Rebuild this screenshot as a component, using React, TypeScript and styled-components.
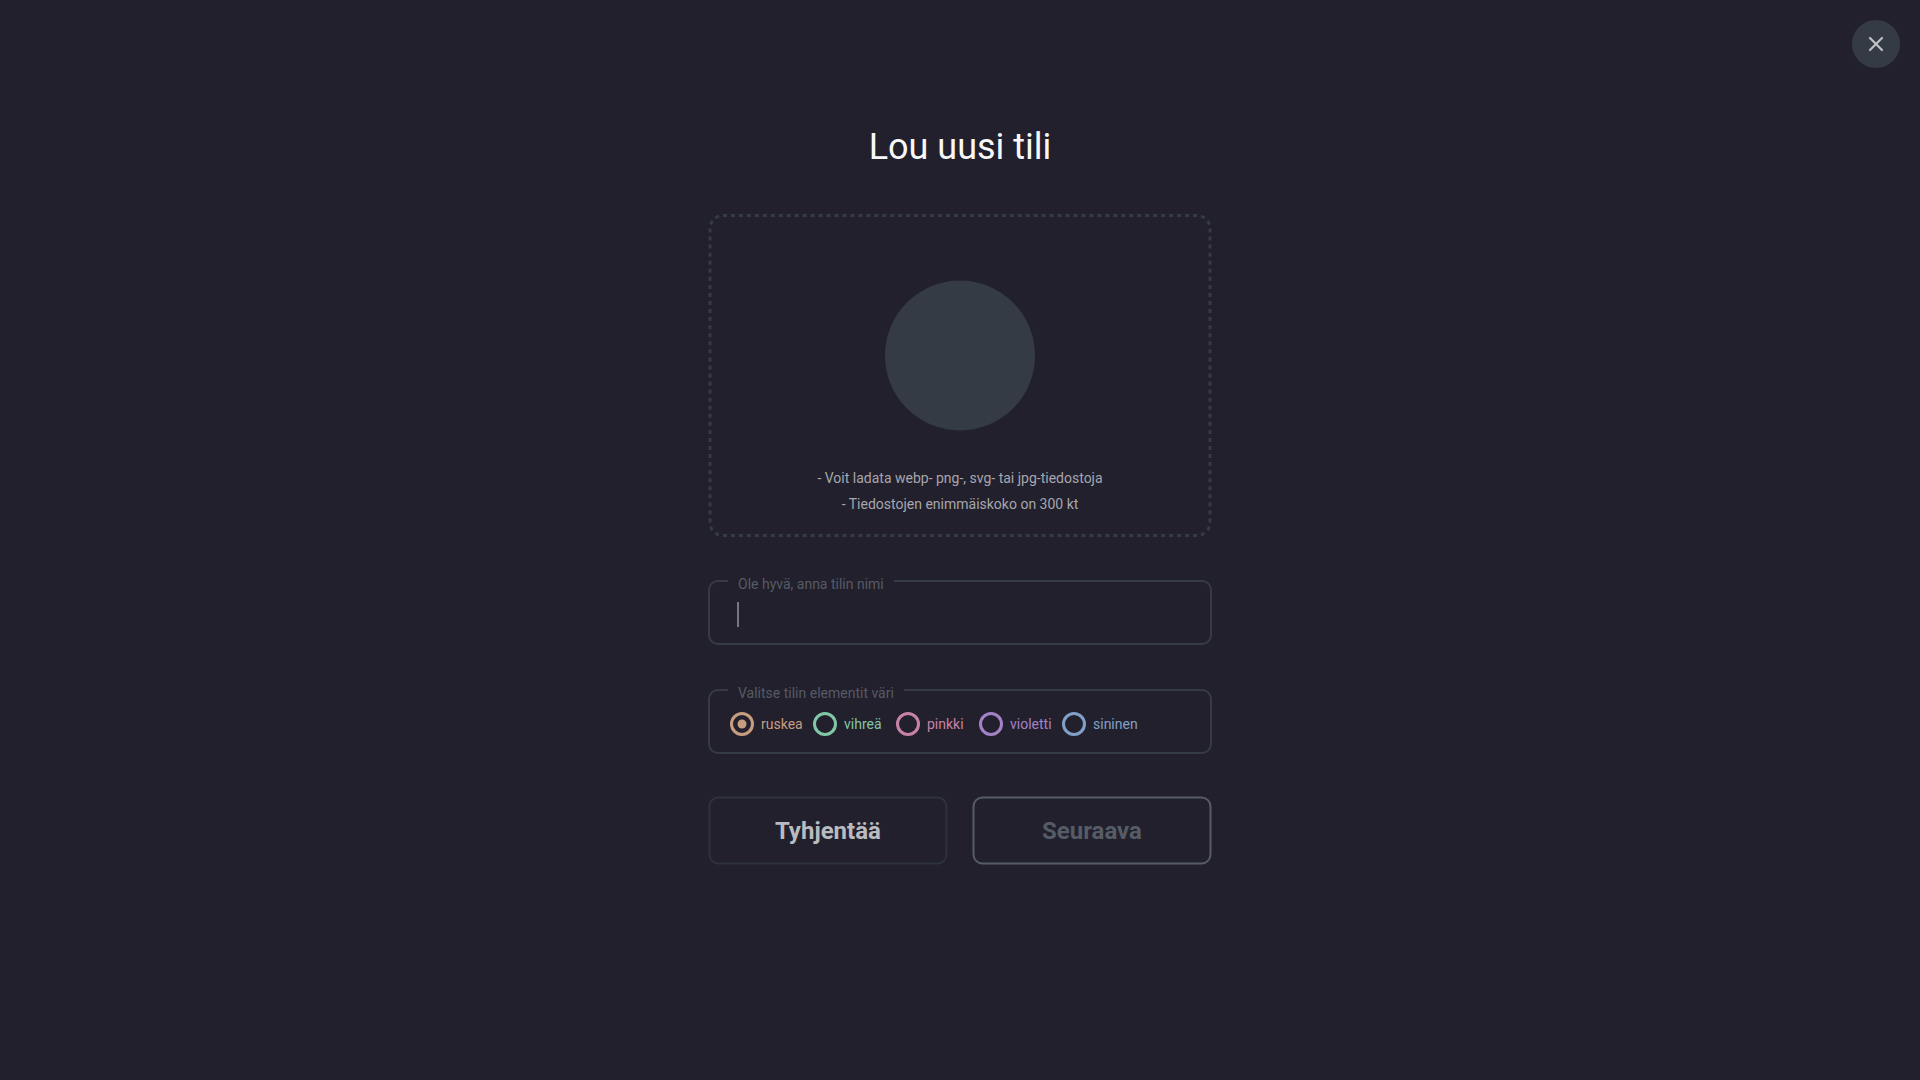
import React, { useState } from "react";
import styled, { createGlobalStyle } from "styled-components";
import { X } from "lucide-react";

const GlobalStyle = createGlobalStyle`
  *, *::before, *::after { box-sizing: border-box; }
  html, body { margin: 0; background: #22202c; }
  body { font-family: Roboto, "Liberation Sans", sans-serif; }
`;

const Page = styled.div`
  width: 1920px;
  height: 1080px;
  overflow: hidden;
  background: #22202c;
`;

const TopBar = styled.header`
  display: flex;
  justify-content: flex-end;
  padding: 20px 20px 0 0;
  height: 68px;
`;

const CloseButton = styled.button`
  display: flex;
  align-items: center;
  justify-content: center;
  width: 48px;
  height: 48px;
  padding: 0;
  border: 0;
  border-radius: 50%;
  background: #353b45;
  color: #c1c3c5;
`;

const Form = styled.form`
  display: flex;
  flex-direction: column;
  width: 504px;
  margin: 0 auto;
`;

const Title = styled.h1`
  margin: 58px 0 0;
  height: 88px;
  text-align: center;
  font-size: 36px;
  font-weight: 400;
  line-height: 42px;
  color: #f8f8f8;
`;

const DropZone = styled.div`
  position: relative;
  display: flex;
  flex-direction: column;
  align-items: center;
  height: 323px;
  padding-top: 66px;
`;

const DashedOutline = styled.svg`
  position: absolute;
  inset: 0;
  width: 504px;
  height: 323px;
  fill: none;
  stroke: #353b45;
  stroke-width: 3px;
`;

const Avatar = styled.div`
  width: 150px;
  height: 150px;
  border-radius: 50%;
  background: #353b45;
  transform: translateY(0.5px);
`;

const Hints = styled.div`
  margin-top: 35px;
  text-align: center;
  font-size: 14px;
  line-height: 26px;
  color: #a6a6ae;
`;

const Field = styled.div<{ $top: number }>`
  display: flex;
  flex-direction: column;
  height: 65px;
  margin-top: ${(p) => p.$top}px;
`;

const Box = styled.fieldset`
  min-width: 0;
  width: 504px;
  height: 73px;
  margin: -8px 0 0;
  padding: 0 18px;
  border: 2px solid #353b45;
  border-radius: 10px;
`;

const Legend = styled.legend`
  height: 18px;
  padding: 4px 10px 0;
  font-size: 14px;
  line-height: 16px;
  color: #565a65;
`;

const NameInput = styled.div`
  display: flex;
  align-items: center;
  height: 48px;
  padding: 1px 0 0 9px;
`;

const Caret = styled.span`
  width: 2px;
  height: 25px;
  background: #77767e;
`;

const Choices = styled.div`
  display: flex;
  padding: 12px 0 0 2px;
`;

const Choice = styled.label<{ $color: string }>`
  display: flex;
  align-items: center;
  gap: 7px;
  width: 83px;
  height: 25px;
  font-size: 14px;
  line-height: 17px;
  color: ${(p) => p.$color};
`;

const ChoiceName = styled.span`
  padding-top: 2px;
`;

const Ring = styled.span`
  display: flex;
  flex: none;
  align-items: center;
  justify-content: center;
  width: 24px;
  height: 24px;
  border: 3px solid currentColor;
  border-radius: 50%;
`;

const Dot = styled.span`
  width: 8px;
  height: 8px;
  border-radius: 50%;
  background: currentColor;
  transform: scale(1.12);
`;

const Actions = styled.div`
  display: flex;
  justify-content: space-between;
  margin-top: 43px;
`;

const ActionButton = styled.button<{ $border: string; $color: string; $nudge: number }>`
  width: 239px;
  height: 68px;
  padding: 0;
  border: 2px solid ${(p) => p.$border};
  border-radius: 10px;
  background: transparent;
  font: 700 24px/28px Roboto, "Liberation Sans", sans-serif;
  color: ${(p) => p.$color};
  transform: translate(${(p) => p.$nudge}px, -0.5px);
`;

const colors = [
  { name: "ruskea", value: "#c79d82" },
  { name: "vihreä", value: "#82c7a5" },
  { name: "pinkki", value: "#c782a5" },
  { name: "violetti", value: "#a582c7" },
  { name: "sininen", value: "#82a0c7" },
];

export default function App() {
  const [selected, setSelected] = useState("ruskea");
  return (
    <Page>
      <GlobalStyle />
      <TopBar>
        <CloseButton aria-label="Sulje">
          <X size={24} strokeWidth={2.2} />
        </CloseButton>
      </TopBar>
      <Form onSubmit={(e) => e.preventDefault()}>
        <Title>Lou uusi tili</Title>
        <DropZone>
          <DashedOutline viewBox="0 0 504 323">
            <path d="M15 1.5H489M15 321.5H489" strokeDasharray="4 3.966" />
            <path d="M2 14.5V308.5M502 14.5V308.5" strokeDasharray="4 4.056" />
            <path
              d="M489 1.5A13 13 0 0 1 502 14.5M502 308.5A13 13 0 0 1 489 321.5M15 321.5A13 13 0 0 1 2 308.5M2 14.5A13 13 0 0 1 15 1.5"
              strokeDasharray="0 4.08 4.08 4.08 4.08 4.2"
            />
          </DashedOutline>
          <Avatar />
          <Hints>
            <div>- Voit ladata webp- png-, svg- tai jpg-tiedostoja</div>
            <div>- Tiedostojen enimmäiskoko on 300 kt</div>
          </Hints>
        </DropZone>
        <Field $top={43}>
          <Box>
            <Legend>Ole hyvä, anna tilin nimi</Legend>
            <NameInput>
              <Caret />
            </NameInput>
          </Box>
        </Field>
        <Field $top={44}>
          <Box>
            <Legend>Valitse tilin elementit väri</Legend>
            <Choices>
              {colors.map((c) => (
                <Choice key={c.name} $color={c.value} onClick={() => setSelected(c.name)}>
                  <Ring>{selected === c.name && <Dot />}</Ring>
                  <ChoiceName>{c.name}</ChoiceName>
                </Choice>
              ))}
            </Choices>
          </Box>
        </Field>
        <Actions>
          <ActionButton type="reset" $border="#2e323c" $color="#b9bbc0" $nudge={0.4}>Tyhjentää</ActionButton>
          <ActionButton type="submit" $border="#565c66" $color="#565c66" $nudge={-0.5}>Seuraava</ActionButton>
        </Actions>
      </Form>
    </Page>
  );
}
